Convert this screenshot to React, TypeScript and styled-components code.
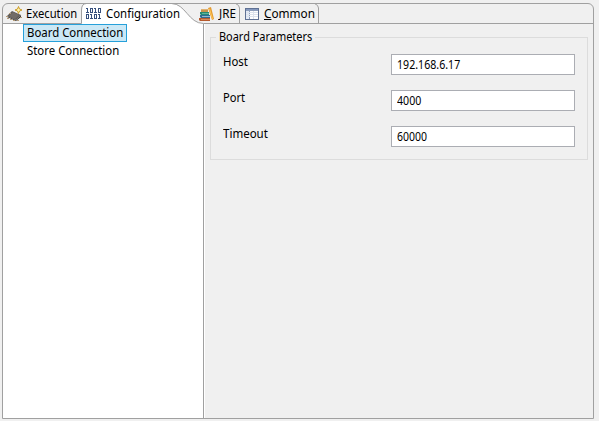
import React from "react";
import styled, { createGlobalStyle } from "styled-components";

const Global = createGlobalStyle`
  * { box-sizing: border-box; }
  body { margin: 0; background: #f0f0f0; overflow: hidden; }
`;

const Page = styled.main`
  width: 599px;
  height: 421px;
  padding: 3px 5px 2px 2px;
  background: #f0f0f0;
  font: 12px/16px "Noto Sans", "Open Sans", sans-serif;
  color: #000;
`;

const Folder = styled.section`
  display: flex;
  flex-direction: column;
  width: 592px;
  height: 416px;
  border: 1px solid #a0a0a0;
  border-radius: 6px 6px 0 0;
`;

const TabBar = styled.nav`
  display: flex;
  position: relative;
  height: 20px;
  flex: none;
`;

const TabOutline = styled.svg`
  position: absolute;
  left: -1px;
  top: -1px;
  overflow: visible;
`;

const Tab = styled.div<{ $width: number; $pad: number }>`
  display: flex;
  position: relative;
  width: ${(p) => p.$width}px;
  padding-left: ${(p) => p.$pad}px;
  height: 20px;
`;

const TabIcon = styled.svg`
  flex: none;
  width: 16px;
  height: 16px;
  margin: 2px 4px 0 0;
`;

const Text = styled.span<{ $stretch?: number }>`
  display: block;
  width: max-content;
  white-space: nowrap;
  transform: scaleX(${(p) => p.$stretch ?? 1});
  transform-origin: 0 0;
`;

const TabText = styled(Text)`
  margin-top: 2px;
`;

const Content = styled.div`
  display: flex;
  flex: 1;
`;

const Sidebar = styled.aside`
  width: 201px;
  border-right: 1px solid #a0a0a0;
  background: #fff;
  flex: none;
`;

const SideItem = styled.div<{ $selected?: boolean }>`
  width: 104px;
  height: 18px;
  margin-left: 20px;
  padding-left: 3px;
  border: 1px solid ${(p) => (p.$selected ? "#26a0da" : "transparent")};
  background: ${(p) => (p.$selected ? "#cbe8f6" : "transparent")};
`;

const Panel = styled.div`
  flex: 1;
  border-left: 1px solid #fff;
  padding: 5px 5px 0;
`;

const Group = styled.fieldset`
  width: 378px;
  height: 131px;
  margin: 0;
  padding: 0;
  min-width: 0;
  border: 0;
  background: linear-gradient(#dcdcdc, #dcdcdc) 0 8px / 100% 1px no-repeat,
    linear-gradient(#dcdcdc, #dcdcdc) 0 8px / 1px 100% no-repeat,
    linear-gradient(#dcdcdc, #dcdcdc) 100% 8px / 1px 100% no-repeat,
    linear-gradient(#dcdcdc, #dcdcdc) 0 100% / 100% 1px no-repeat;
`;

const GroupTitle = styled.legend`
  display: block;
  float: left;
  width: 99px;
  height: 16px;
  margin-left: 6px;
  padding: 0 0 0 3px;
  background: #f0f0f0;
`;

const Fields = styled.div`
  clear: both;
  display: flex;
  flex-direction: column;
  gap: 14px;
  padding: 9px 13px 0;
`;

const Field = styled.label`
  display: flex;
  justify-content: space-between;
  height: 22px;
`;

const Value = styled.div`
  width: 184px;
  height: 21px;
  padding: 2px 0 0 5px;
  border: 1px solid #abadb3;
  background: #fff;
`;

const ExecutionIcon = () => (
  <TabIcon viewBox="0 0 16 16">
    <path d="M1 10 6 5l9 4-5 5z" fill="#605c58" />
    <path d="m1 10 9 4v1L1 11zM10 14l5-5v2l-5 4z" fill="#3f3b38" />
    <path d="M3 10 7 6l6 3-4 4z" fill="#726c67" />
    <path d="M0 10h2v1H0zM1 12h2v1H1zM4 13h2v1H4zM7 14h2v1H7zM11 14h2v1h-2zM14 11h2v1h-2zM3 7h2v1H3z" fill="#b49b78" />
    <path d="m12.500 .5 1 2.500 2.500 1-2.500 1-1 2.500-1-2.500L9 4l2.500-1z" fill="#fff4b0" stroke="#c79418" strokeWidth=".9" />
  </TabIcon>
);

const BinaryIcon = () => (
  <TabIcon viewBox="0 0 16 16" shapeRendering="crispEdges">
    <g fill="none" stroke="#364f7d">
      <path d="M0 2.5h1M1.5 2v5M0 6.5h3M4.5 2.5h2v4h-2zM8 2.5h1M9.5 2v5M8 6.5h3M12.5 2.5h2v4h-2z" />
      <path d="M.5 8.5h2v4h-2zM4 8.5h1M5.5 8v5M4 12.5h3M8.5 8.5h2v4h-2zM12 8.5h1M13.5 8v5M12 12.5h3" />
    </g>
  </TabIcon>
);

const BooksIcon = () => (
  <TabIcon viewBox="0 0 16 16">
    <path d="M2 3h7v3H2z" fill="#c7944d" />
    <path d="M2 3h7v1H2z" fill="#e0b373" />
    <path d="M1 6h9v3H2L1 8z" fill="#258a75" />
    <path d="M3 7h7v1H3z" fill="#5fb59c" />
    <path d="M1 9h10v3H2l-1-1z" fill="#316b91" />
    <path d="M3 10h8v1H3z" fill="#91b9cf" />
    <path d="M0 12h11v3H1l-1-1z" fill="#b65a2d" />
    <path d="M2 13h9v1H2z" fill="#d58a5c" />
    <path d="m9 2 3-1 3 12-2 1z" fill="#e39b32" />
    <path d="m10 3 1-.3 3 10-1 .3z" fill="#ffc659" />
  </TabIcon>
);

const TableIcon = () => (
  <TabIcon viewBox="0 0 16 16" shapeRendering="crispEdges">
    <path d="M1.500 2.500h13v11h-13z" fill="#fff" stroke="#5f7194" />
    <path d="M2 3h12v1H2z" fill="#8397bd" />
    <path d="M2 4h3v9H2z" fill="#e3eaf5" />
    <path d="M2 4.500h12M5.500 4v9" stroke="#8d9dba" />
    <path d="M2 6.500h12M2 8.500h12M2 10.500h12M9.500 5v8" stroke="#dde3ed" />
  </TabIcon>
);

export default function App() {
  return (
    <>
      <Global />
      <Page>
        <Folder>
          <TabBar>
            <TabOutline width="592" height="21" fill="none" stroke="#a0a0a0">
              <path d="M80 21V7q0-6 5-6h85c13 0 17 19 31 19v1z" fill="#fff" stroke="none" />
              <path d="M0 20.5H79.5V7q0-6.500 5-6.500h85c14 0 17 20 32 20H591M237.500 20V5q0-3-4-4.500M316.500 20V5q0-3-4-4.500" />
            </TabOutline>
            <Tab $width={80} $pad={3}><ExecutionIcon /><TabText $stretch={0.935}>Execution</TabText></Tab>
            <Tab $width={113} $pad={3}><BinaryIcon /><TabText $stretch={0.95}>Configuration</TabText></Tab>
            <Tab $width={44} $pad={3}><BooksIcon /><TabText $stretch={0.97}>JRE</TabText></Tab>
            <Tab $width={80} $pad={4}><TableIcon /><TabText $stretch={0.98}><u>C</u>ommon</TabText></Tab>
          </TabBar>
          <Content>
            <Sidebar>
              <SideItem $selected><Text $stretch={0.95}>Board Connection</Text></SideItem>
              <SideItem><Text $stretch={0.95}>Store Connection</Text></SideItem>
            </Sidebar>
            <Panel>
              <Group>
                <GroupTitle><Text $stretch={0.912}>Board Parameters</Text></GroupTitle>
                <Fields>
                  <Field><Text $stretch={0.95}>Host</Text><Value><Text $stretch={0.885}>192.168.6.17</Text></Value></Field>
                  <Field><Text $stretch={0.93}>Port</Text><Value><Text $stretch={0.885}>4000</Text></Value></Field>
                  <Field><Text $stretch={0.96}>Timeout</Text><Value><Text $stretch={0.875}>60000</Text></Value></Field>
                </Fields>
              </Group>
            </Panel>
          </Content>
        </Folder>
      </Page>
    </>
  );
}
